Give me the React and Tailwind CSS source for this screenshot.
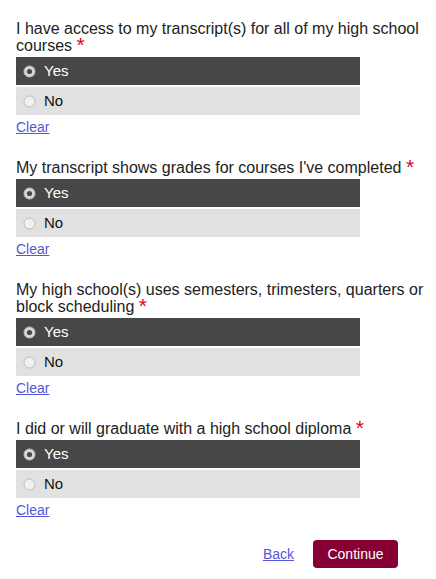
import { useState } from "react";

const questions = [
  { id: "q1", text: "I have access to my transcript(s) for all of my high school courses" },
  { id: "q2", text: "My transcript shows grades for courses I've completed" },
  { id: "q3", text: "My high school(s) uses semesters, trimesters, quarters or block scheduling" },
  { id: "q4", text: "I did or will graduate with a high school diploma" },
];

function Radio({ checked }) {
  return (
    <svg width="13" height="13" viewBox="0 0 13 13" className="shrink-0">
      {checked ? (
        <>
          <circle cx="6.5" cy="6.5" r="5.5" fill="#d8d8d8" stroke="#bdbdbd" />
          <circle cx="6.5" cy="6.5" r="2.6" fill="#4a4a4a" />
        </>
      ) : (
        <circle cx="6.5" cy="6.5" r="5.5" fill="#f0f0f0" stroke="#bcbcbc" />
      )}
    </svg>
  );
}

function Question({ q, value, onChange }) {
  const opts = ["Yes", "No"];
  return (
    <div className="mb-[24px]">
      <p className="text-[16px] leading-[17px] text-[#222]">
        {q.text}{" "}
        <span className="text-[#e0001b] text-[21px] leading-[10px] relative top-[1px]">*</span>
      </p>
      <div className="mt-[3px] w-[344px] flex flex-col gap-[2px]">
        {opts.map((o) => {
          const on = value === o;
          return (
            <button
              key={o}
              onClick={() => onChange(o)}
              className={`h-[28px] flex items-center gap-[8px] pl-[7px] text-left text-[15px] ${on ? "bg-[#474747] text-white" : "bg-[#e1e1e1] text-[#111]"}`}
            >
              <Radio checked={on} />
              <span>{o}</span>
            </button>
          );
        })}
      </div>
      <a href="#" onClick={(e) => { e.preventDefault(); onChange(null); }} className="mt-[4px] block w-fit text-[14px] leading-[16px] text-[#5656d6] underline">
        Clear
      </a>
    </div>
  );
}

export default function App() {
  const [answers, setAnswers] = useState({ q1: "Yes", q2: "Yes", q3: "Yes", q4: "Yes" });
  return (
    <div className="bg-white min-h-[579px] pl-[16px] pr-[2px] pt-[20px]" style={{ fontFamily: '"Liberation Sans", Arial, sans-serif' }}>
      {questions.map((q) => (
        <Question key={q.id} q={q} value={answers[q.id]} onChange={(v) => setAnswers({ ...answers, [q.id]: v })} />
      ))}
      <div className="w-[382px] flex items-center justify-end gap-[19px] -mt-[2px]">
        <a href="#" className="text-[14px] text-[#5656d6] underline">Back</a>
        <button className="h-[28px] w-[85px] rounded-[4px] bg-[#870034] text-white text-[14px]">Continue</button>
      </div>
    </div>
  );
}
